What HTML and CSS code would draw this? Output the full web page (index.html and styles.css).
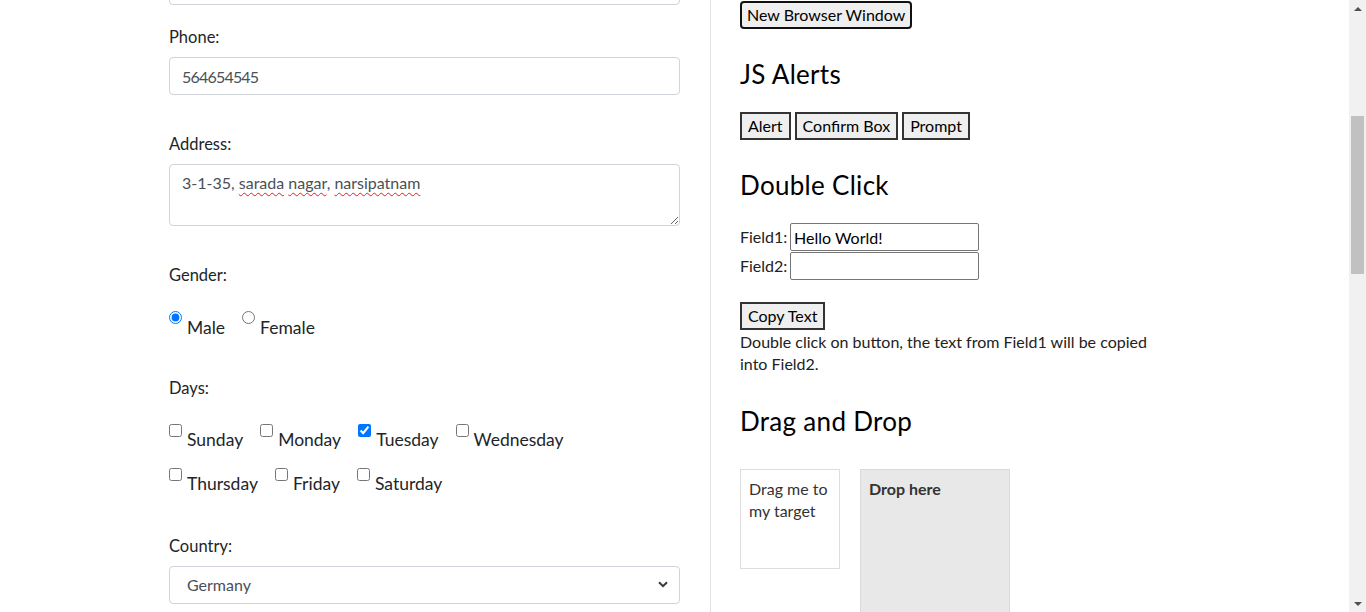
FILE: index.html
```html
<!DOCTYPE html>
<html lang="en">
<head>
<meta charset="utf-8">
<title>Automation Testing Practice</title>
<link rel="stylesheet" href="styles.css">
</head>
<body>
<div class="page">
  <section class="form-col">
    <div class="group group-email">
      <input class="form-control" type="email" aria-label="Email">
    </div>

    <div class="group group-phone">
      <label class="form-label" for="phone">Phone:</label>
      <input class="form-control phone-input" id="phone" type="text" value="564654545">
    </div>

    <div class="group group-address">
      <label class="form-label">Address:</label>
      <div class="form-control textarea" role="textbox">3-1-35, <span class="misspelled">sarada</span> <span class="misspelled">nagar</span>, <span class="misspelled">narsipatnam</span></div>
    </div>

    <div class="group group-gender">
      <label class="form-label">Gender:</label>
      <div class="options radio-options">
        <label class="option"><input type="radio" name="gender" checked><span>Male</span></label>
        <label class="option"><input type="radio" name="gender"><span>Female</span></label>
      </div>
    </div>

    <div class="group group-days">
      <label class="form-label">Days:</label>
      <div class="options check-options">
        <label class="option"><input type="checkbox"><span>Sunday</span></label>
        <label class="option"><input type="checkbox"><span>Monday</span></label>
        <label class="option"><input type="checkbox" checked><span>Tuesday</span></label>
        <label class="option"><input type="checkbox"><span>Wednesday</span></label>
        <label class="option"><input type="checkbox"><span>Thursday</span></label>
        <label class="option"><input type="checkbox"><span>Friday</span></label>
        <label class="option"><input type="checkbox"><span>Saturday</span></label>
      </div>
    </div>

    <div class="group group-country">
      <label class="form-label" for="country">Country:</label>
      <div class="select-wrap">
        <select class="form-select" id="country">
          <option>Germany</option>
        </select>
        <svg class="chevron" width="10" height="7" viewBox="0 0 10 7" aria-hidden="true"><path d="M1 1.2 L5 5.2 L9 1.2" fill="none" stroke="#343a40" stroke-width="2"/></svg>
      </div>
    </div>
  </section>

  <section class="tools-col">
    <button class="btn btn-window" type="button">New Browser Window</button>

    <h2 class="section-title title-alerts">JS Alerts</h2>
    <div class="btn-row">
      <button class="btn btn-square" type="button">Alert</button>
      <button class="btn btn-square" type="button">Confirm Box</button>
      <button class="btn btn-square" type="button">Prompt</button>
    </div>

    <h2 class="section-title title-dbl">Double Click</h2>
    <div class="field-row field-row-1">
      <label class="field-label" for="field1">Field1:</label>
      <input class="field-input" id="field1" type="text" value="Hello World!">
    </div>
    <div class="field-row">
      <label class="field-label" for="field2">Field2:</label>
      <input class="field-input" id="field2" type="text">
    </div>
    <button class="btn btn-square btn-copy" type="button">Copy Text</button>
    <p class="hint">Double click on button, the text from Field1 will be copied into Field2.</p>

    <h2 class="section-title title-dnd">Drag and Drop</h2>
    <div class="dnd">
      <div class="draggable">Drag me to my target</div>
      <div class="droppable"><strong>Drop here</strong></div>
    </div>
  </section>
</div>

<div class="scrollbar" aria-hidden="true">
  <span class="sb-arrow"><span class="tri-up"></span></span>
  <span class="sb-track"><span class="sb-thumb"></span></span>
  <span class="sb-arrow"><span class="tri-down"></span></span>
</div>
</body>
</html>
```
FILE: styles.css
```css
html, body {
  margin: 0;
  height: 100%;
  overflow: hidden;
}

body {
  font-family: Lato, "Segoe UI", sans-serif;
  font-size: 16px;
  line-height: 1.5;
  color: #212529;
  background: #fff;
}

.page {
  display: flex;
  align-items: stretch;
  min-height: 100%;
  padding-left: 169px;
}

/* ---------- left: form ---------- */
.form-col {
  width: 511px;
  flex: none;
  padding-right: 30px;
}

.group-email { margin-top: -33px; }
.group-phone { margin-top: 20px; }
.group-address { margin-top: 37px; }
.group-gender { margin-top: 37px; }
.group-days { margin-top: 36px; }
.group-country { margin-top: 38px; }

.form-label {
  display: block;
  margin-bottom: 8px;
  font-size: 16.5px;
  line-height: 24px;
  color: #212529;
}

.form-control {
  display: block;
  box-sizing: border-box;
  width: 100%;
  height: 38px;
  margin: 0;
  padding: 6px 12px;
  font: inherit;
  line-height: 24px;
  color: #495057;
  background: #fff;
  border: 1px solid #ced4da;
  border-radius: 4px;
}

.phone-input {
  letter-spacing: -0.8px;
}

.textarea {
  height: 62px;
  overflow: auto;
  resize: vertical;
  padding-top: 6px;
}

.misspelled {
  text-decoration: underline wavy #e0201c;
  text-decoration-thickness: 1px;
  text-decoration-skip-ink: none;
  text-underline-offset: 3px;
}

.options {
  display: flex;
  flex-wrap: wrap;
}

.radio-options { margin-top: 24px; }

.check-options {
  margin-top: 24px;
  row-gap: 16px;
  width: 430px;
}

.option {
  display: inline-flex;
  align-items: flex-start;
  margin-right: 17px;
  font-size: 17.5px;
  line-height: 24px;
  color: #212529;
}

.option input {
  width: 13px;
  height: 13px;
  margin: 0 5px 0 0;
  flex: none;
}

.radio-options .option span { padding-top: 5px; }
.check-options .option span { padding-top: 4px; }

.select-wrap {
  position: relative;
}

.form-select {
  display: block;
  box-sizing: border-box;
  width: 100%;
  height: 38px;
  margin: 0;
  padding: 6px 36px 6px 17px;
  font: inherit;
  line-height: 24px;
  color: #495057;
  background: #fff;
  border: 1px solid #ced4da;
  border-radius: 4px;
  appearance: none;
  -webkit-appearance: none;
}

.chevron {
  position: absolute;
  right: 12px;
  top: 15px;
  pointer-events: none;
}

/* ---------- right: tools ---------- */
.tools-col {
  flex: none;
  width: 420px;
  border-left: 1px solid #dee2e6;
  padding-left: 29px;
  color: #222;
}

.btn {
  box-sizing: border-box;
  height: 28px;
  margin: 0;
  padding: 0 6px;
  font: inherit;
  line-height: 24px;
  color: #000;
  background: #efefef;
  border: 2px solid #333;
  border-radius: 0;
}

.btn-window {
  display: block;
  margin-top: 1px;
  padding: 0 5px;
  border-color: #111;
  border-radius: 4px;
}

.section-title {
  margin: 0;
  font-size: 26px;
  font-weight: 400;
  letter-spacing: 0.3px;
  line-height: 32px;
  color: #000;
}

.title-alerts { margin: 29px 0 22px; }
.title-dbl { margin: 29px 0 22px; }
.title-dnd { margin: 31px 0 32px; }

.btn-row {
  display: flex;
  gap: 4px;
}

.field-row {
  display: flex;
  align-items: center;
  height: 28px;
}

.field-row-1 { margin-bottom: 1px; }

.field-label {
  width: 50px;
  flex: none;
}

.field-input {
  box-sizing: border-box;
  width: 189px;
  height: 28px;
  margin: 0;
  padding: 0 3px;
  font: inherit;
  color: #000;
  background: #fff;
  border: 1px solid #767676;
  border-radius: 2px;
}

.btn-copy {
  display: block;
  margin-top: 22px;
}

.hint {
  margin: 1px 0 0;
  line-height: 21.5px;
  width: 420px;
}

.dnd {
  display: flex;
  align-items: flex-start;
  gap: 20px;
}

.draggable {
  box-sizing: border-box;
  width: 100px;
  height: 100px;
  padding: 8px;
  line-height: 21.5px;
  color: #333;
  border: 1px solid #ddd;
}

.droppable {
  box-sizing: border-box;
  width: 150px;
  height: 150px;
  padding: 8px;
  line-height: 21.5px;
  color: #333;
  background: #e8e8e8;
  border: 1px solid #dadada;
}

/* ---------- fake scrollbar ---------- */
.scrollbar {
  position: fixed;
  top: 0;
  right: 0;
  bottom: 0;
  width: 17px;
  display: flex;
  flex-direction: column;
  background: #f1f1f1;
}

.sb-arrow {
  height: 17px;
  flex: none;
  display: flex;
  align-items: center;
  justify-content: center;
}

.tri-up, .tri-down {
  width: 0;
  height: 0;
  border-left: 4px solid transparent;
  border-right: 4px solid transparent;
}

.tri-up { border-bottom: 4px solid #505050; }
.tri-down { border-top: 4px solid #505050; }

.sb-track {
  flex: 1;
  padding: 0 2px;
}

.sb-thumb {
  display: block;
  margin-top: 99px;
  height: 158px;
  background: #c1c1c1;
}
```
